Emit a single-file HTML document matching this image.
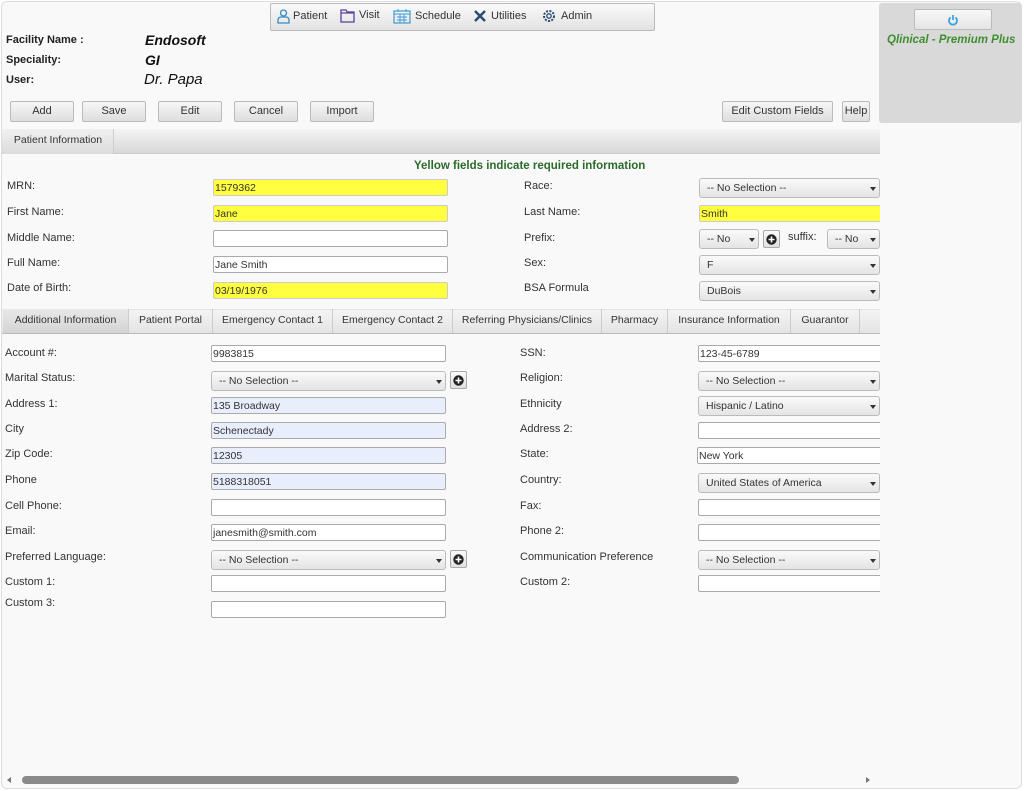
<!DOCTYPE html>
<html><head><meta charset="utf-8"><style>
*{box-sizing:border-box;margin:0;padding:0}
body{width:1024px;height:791px;background:#fff;font-family:"Liberation Sans",sans-serif;font-size:11px;color:#333;position:relative;overflow:hidden}
.a{position:absolute}
.frame{left:1px;top:1px;width:1021px;height:788px;border:1px solid #ddd;border-radius:6px;background:#f9f9f9}
.lbl{position:absolute;font-size:11px;color:#333;white-space:nowrap}
.in{position:absolute;height:17px;border:1px solid #aaa;border-radius:2px;background:#fff;font-size:10.5px;padding:2px 1px;line-height:12px;white-space:nowrap;overflow:hidden}
.y{background:#ffff40;border-color:#ccc}
.b{background:#e8eefc}
.sel{position:absolute;height:20px;border:1px solid #bbb;border-radius:3px;background:linear-gradient(#fafafa,#e4e4e4);font-size:10.5px;padding:3px 7px;line-height:12px;white-space:nowrap;overflow:hidden}
.sel:after{content:"";position:absolute;right:3px;top:8px;border:3.5px solid transparent;border-top:4px solid #333}
.plus{position:absolute;width:17px;height:18px;border:1px solid #aaa;border-radius:2px;background:linear-gradient(#fafafa,#e0e0e0)}
.plus svg{position:absolute;left:2px;top:3px}
.btn{position:absolute;top:101px;height:21px;border:1px solid #bbb;border-radius:2px;background:linear-gradient(#f6f6f6,#dedede);text-align:center;line-height:19px;font-size:11px;color:#333}
.tab{position:absolute;top:309px;height:24px;border-right:1px solid #ccc;line-height:22px;text-align:center;font-size:10.5px;color:#333}
.clip{position:absolute;left:0;top:0;width:880px;height:791px;overflow:hidden}
</style></head><body>
<div class="a frame"></div>
<div class="a" style="left:879px;top:3px;width:142px;height:120px;background:#d9d9d9;border-radius:3px"></div>
<div class="a" style="left:914px;top:9px;width:78px;height:21px;border:1px solid #bbb;border-radius:2px;background:linear-gradient(#f8f8f8,#e4e4e4)">
<svg width="12" height="12" viewBox="0 0 12 12" style="position:absolute;left:32px;top:4px"><path d="M3.5 3.5A4 4 0 1 0 8.5 3.5" stroke="#3da3e0" stroke-width="1.8" fill="none"/><path d="M6 1v5" stroke="#3da3e0" stroke-width="1.8"/></svg></div>
<div class="a" style="left:887px;top:34px;font:italic bold 11.5px 'Liberation Sans',sans-serif;color:#3f8f2f">Qlinical - Premium Plus</div>

<div class="clip">
<div class="a" style="left:270px;top:3px;width:385px;height:28px;border:1px solid #bbb;border-radius:2px;background:linear-gradient(#fafafa,#e2e2e2)"></div>
<svg class="a" style="left:277px;top:9px" width="13" height="15" viewBox="0 0 13 15"><circle cx="6.5" cy="4" r="3" fill="none" stroke="#3a8ac4" stroke-width="1.3"/><path d="M1 14v-3a3 3 0 0 1 3-3h5a3 3 0 0 1 3 3v3z" fill="none" stroke="#3a8ac4" stroke-width="1.3"/></svg>
<div class="a" style="left:293px;top:10px;font-size:11px">Patient</div>
<svg class="a" style="left:340px;top:9px" width="15" height="14" viewBox="0 0 15 14"><path d="M1 1h5l1 2h7v10H1z" fill="none" stroke="#5a3fa0" stroke-width="1.3"/><path d="M1 4h13" stroke="#5a3fa0" stroke-width="1.2"/></svg>
<div class="a" style="left:359px;top:9px">Visit</div>
<svg class="a" style="left:393px;top:9px" width="18" height="15" viewBox="0 0 18 15"><rect x="1" y="2" width="16" height="12" fill="none" stroke="#3a9ad4" stroke-width="1.2"/><path d="M1 5h16M4 8h10M4 11h10M7 5v9M11 5v9M5 0v3M13 0v3" stroke="#3a9ad4" stroke-width="0.9"/></svg>
<div class="a" style="left:415px;top:10px">Schedule</div>
<svg class="a" style="left:473px;top:9px" width="14" height="14" viewBox="0 0 14 14"><path d="M2 2l10 10M12 2L2 12" stroke="#2a4a70" stroke-width="2.4"/></svg>
<div class="a" style="left:491px;top:10px">Utilities</div>
<svg class="a" style="left:542px;top:9px" width="14" height="14" viewBox="0 0 14 14"><circle cx="7" cy="7" r="5" fill="none" stroke="#2a4a70" stroke-width="2" stroke-dasharray="2 1.4"/><circle cx="7" cy="7" r="2.2" fill="none" stroke="#2a4a70" stroke-width="1.3"/></svg>
<div class="a" style="left:561px;top:10px">Admin</div>

<div class="lbl" style="left:6px;top:34px;font-weight:bold;color:#222">Facility Name :</div>
<div class="lbl" style="left:6px;top:54px;font-weight:bold;color:#222">Speciality:</div>
<div class="lbl" style="left:6px;top:74px;font-weight:bold;color:#222">User:</div>
<div class="a" style="left:145px;top:32px;font:italic bold 14px 'Liberation Sans',sans-serif;color:#111">Endosoft</div>
<div class="a" style="left:145px;top:52px;font:italic bold 14px 'Liberation Sans',sans-serif;color:#111">GI</div>
<div class="a" style="left:144px;top:71px;font:italic 15px 'Liberation Sans',sans-serif;color:#111">Dr. Papa</div>

<div class="btn" style="left:10px;width:64px">Add</div>
<div class="btn" style="left:82px;width:64px">Save</div>
<div class="btn" style="left:158px;width:64px">Edit</div>
<div class="btn" style="left:234px;width:64px">Cancel</div>
<div class="btn" style="left:310px;width:64px">Import</div>
<div class="btn" style="left:722px;width:111px">Edit Custom Fields</div>
<div class="btn" style="left:842px;width:28px">Help</div>

<div class="a" style="left:2px;top:129px;width:878px;height:25px;background:linear-gradient(#f4f4f4,#d8d8d8);border-bottom:1px solid #ccc"></div>
<div class="a" style="left:3px;top:129px;width:111px;height:25px;background:linear-gradient(#f0f0f0,#dcdcdc);border-right:1px solid #ccc;text-align:center;line-height:22px;font-size:10.5px">Patient Information</div>
<div class="a" style="left:414px;top:160px;font:bold 11.5px 'Liberation Sans',sans-serif;color:#2a6a2a">Yellow fields indicate required information</div>

<div class="lbl" style="left:7px;top:180px">MRN:</div><div class="in y" style="left:213px;top:179px;width:235px">1579362</div>
<div class="lbl" style="left:7px;top:206px">First Name:</div><div class="in y" style="left:213px;top:205px;width:235px">Jane</div>
<div class="lbl" style="left:7px;top:232px">Middle Name:</div><div class="in" style="left:213px;top:230px;width:235px"></div>
<div class="lbl" style="left:7px;top:257px">Full Name:</div><div class="in" style="left:213px;top:256px;width:235px">Jane Smith</div>
<div class="lbl" style="left:7px;top:282px">Date of Birth:</div><div class="in y" style="left:213px;top:282px;width:235px">03/19/1976</div>

<div class="lbl" style="left:524px;top:180px">Race:</div><div class="sel" style="left:699px;top:178px;width:181px">-- No Selection --</div>
<div class="lbl" style="left:524px;top:206px">Last Name:</div><div class="in y" style="left:699px;top:205px;width:190px">Smith</div>
<div class="lbl" style="left:524px;top:232px">Prefix:</div><div class="sel" style="left:699px;top:229px;width:60px">-- No</div><div class="plus" style="left:763px;top:230px"><svg width="11" height="11" viewBox="0 0 11 11"><circle cx="5.5" cy="5.5" r="5.2" fill="#222"/><path d="M5.5 2.5v6M2.5 5.5h6" stroke="#fff" stroke-width="1.6"/></svg></div>
<div class="lbl" style="left:788px;top:231px">suffix:</div><div class="sel" style="left:827px;top:229px;width:53px">-- No</div>
<div class="lbl" style="left:524px;top:257px">Sex:</div><div class="sel" style="left:699px;top:255px;width:181px">F</div>
<div class="lbl" style="left:524px;top:282px">BSA Formula</div><div class="sel" style="left:699px;top:281px;width:181px">DuBois</div>

<div class="a" style="left:2px;top:309px;width:878px;height:25px;background:linear-gradient(#f4f4f4,#e4e4e4);border-bottom:1px solid #bbb;border-top:1px solid #e4e4e4"></div>
<div class="tab" style="left:3px;width:126px;background:linear-gradient(#e8e8e8,#d4d4d4)">Additional Information</div>
<div class="tab" style="left:129px;width:84px">Patient Portal</div>
<div class="tab" style="left:213px;width:120px">Emergency Contact 1</div>
<div class="tab" style="left:333px;width:120px">Emergency Contact 2</div>
<div class="tab" style="left:453px;width:149px">Referring Physicians/Clinics</div>
<div class="tab" style="left:602px;width:66px">Pharmacy</div>
<div class="tab" style="left:668px;width:123px">Insurance Information</div>
<div class="tab" style="left:791px;width:69px">Guarantor</div>

<div class="lbl" style="left:5px;top:347px">Account #:</div><div class="in" style="left:211px;top:345px;width:235px">9983815</div>
<div class="lbl" style="left:5px;top:372px">Marital Status:</div><div class="sel" style="left:211px;top:371px;width:235px">-- No Selection --</div><div class="plus" style="left:450px;top:371px"><svg width="11" height="11" viewBox="0 0 11 11"><circle cx="5.5" cy="5.5" r="5.2" fill="#222"/><path d="M5.5 2.5v6M2.5 5.5h6" stroke="#fff" stroke-width="1.6"/></svg></div>
<div class="lbl" style="left:5px;top:398px">Address 1:</div><div class="in b" style="left:211px;top:397px;width:235px">135 Broadway</div>
<div class="lbl" style="left:5px;top:423px">City</div><div class="in b" style="left:211px;top:422px;width:235px">Schenectady</div>
<div class="lbl" style="left:5px;top:448px">Zip Code:</div><div class="in b" style="left:211px;top:447px;width:235px">12305</div>
<div class="lbl" style="left:5px;top:474px">Phone</div><div class="in b" style="left:211px;top:473px;width:235px">5188318051</div>
<div class="lbl" style="left:5px;top:500px">Cell Phone:</div><div class="in" style="left:211px;top:499px;width:235px"></div>
<div class="lbl" style="left:5px;top:525px">Email:</div><div class="in" style="left:211px;top:524px;width:235px">janesmith@smith.com</div>
<div class="lbl" style="left:5px;top:551px">Preferred Language:</div><div class="sel" style="left:211px;top:550px;width:235px">-- No Selection --</div><div class="plus" style="left:450px;top:550px"><svg width="11" height="11" viewBox="0 0 11 11"><circle cx="5.5" cy="5.5" r="5.2" fill="#222"/><path d="M5.5 2.5v6M2.5 5.5h6" stroke="#fff" stroke-width="1.6"/></svg></div>
<div class="lbl" style="left:5px;top:576px">Custom 1:</div><div class="in" style="left:211px;top:575px;width:235px"></div>
<div class="lbl" style="left:5px;top:597px">Custom 3:</div><div class="in" style="left:211px;top:601px;width:235px"></div>

<div class="lbl" style="left:520px;top:347px">SSN:</div><div class="in" style="left:698px;top:345px;width:190px">123-45-6789</div>
<div class="lbl" style="left:520px;top:372px">Religion:</div><div class="sel" style="left:698px;top:371px;width:182px">-- No Selection --</div>
<div class="lbl" style="left:520px;top:398px">Ethnicity</div><div class="sel" style="left:698px;top:396px;width:182px">Hispanic / Latino</div>
<div class="lbl" style="left:520px;top:423px">Address 2:</div><div class="in" style="left:698px;top:422px;width:190px"></div>
<div class="lbl" style="left:520px;top:448px">State:</div><div class="in" style="left:697px;top:447px;width:190px">New York</div>
<div class="lbl" style="left:520px;top:474px">Country:</div><div class="sel" style="left:698px;top:473px;width:182px">United States of America</div>
<div class="lbl" style="left:520px;top:500px">Fax:</div><div class="in" style="left:698px;top:499px;width:190px"></div>
<div class="lbl" style="left:520px;top:525px">Phone 2:</div><div class="in" style="left:698px;top:524px;width:190px"></div>
<div class="lbl" style="left:520px;top:551px">Communication Preference</div><div class="sel" style="left:698px;top:550px;width:182px">-- No Selection --</div>
<div class="lbl" style="left:520px;top:576px">Custom 2:</div><div class="in" style="left:698px;top:575px;width:190px"></div>
</div>

<div class="a" style="left:7px;top:777px;border:3px solid transparent;border-right:4px solid #777;border-left:0"></div>
<div class="a" style="left:22px;top:776px;width:717px;height:8px;border-radius:4px;background:#8a8a8a"></div>
<div class="a" style="left:866px;top:777px;border:3px solid transparent;border-left:4px solid #777;border-right:0"></div>
</body></html>
